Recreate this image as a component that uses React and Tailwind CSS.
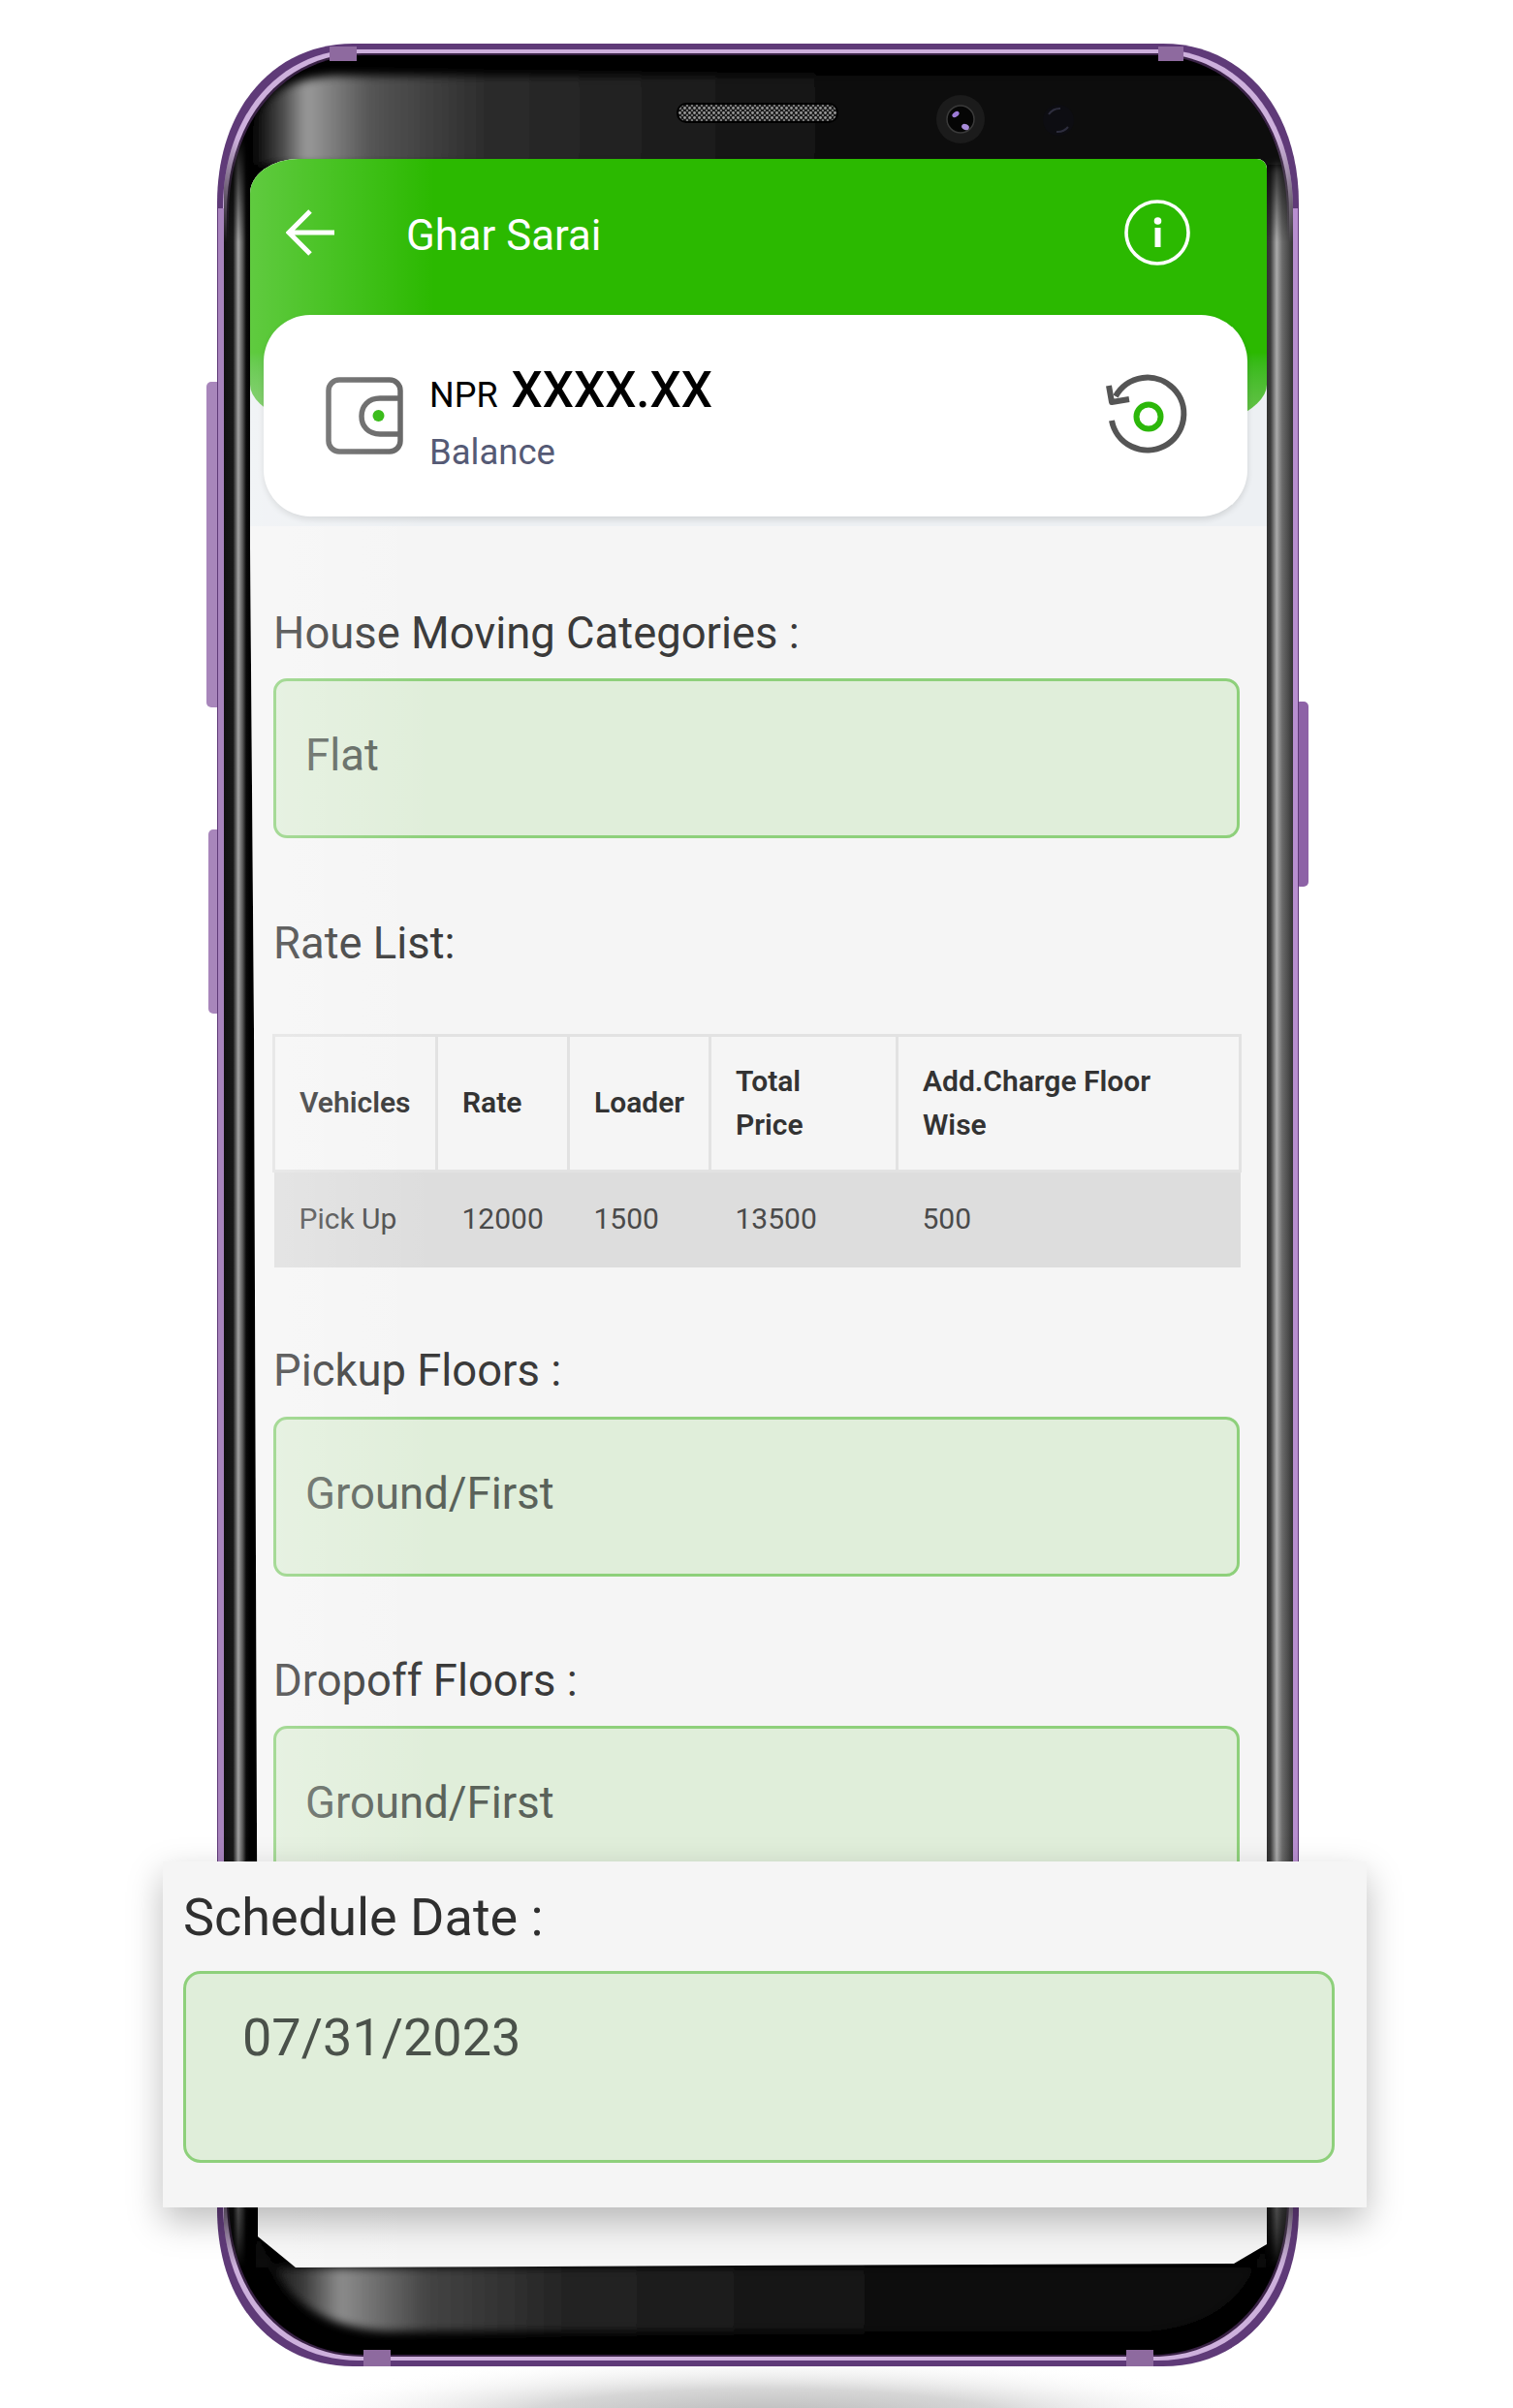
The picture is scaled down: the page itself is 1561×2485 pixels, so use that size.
import React from "react";

const framePath = (i) => {
  const l = 224 + i;
  const r = 1340 - i;
  const t = 45 + i;
  const b = 2442 - i;
  return `M${l + 140} ${t}H${r - 140}C${r - 60} ${t} ${r} ${t + 65} ${r} ${t + 165}V${b - 162}C${r} ${b - 62} ${r - 60} ${b} ${r - 140} ${b}H${l + 140}C${l + 60} ${b} ${l} ${b - 62} ${l} ${b - 162}V${t + 165}C${l} ${t + 65} ${l + 60} ${t} ${l + 140} ${t}Z`;
};

function PhoneBody() {
  return (
    <svg className="absolute inset-0" width="1561" height="2485" viewBox="0 0 1561 2485">
      <defs>
        <linearGradient id="topGlare" gradientUnits="userSpaceOnUse" x1="262" x2="860" y1="0" y2="0">
          <stop offset="0" stopColor="#050505" />
          <stop offset="0.05" stopColor="#4a4a4a" />
          <stop offset="0.09" stopColor="#9a9a9a" />
          <stop offset="0.2" stopColor="#555" />
          <stop offset="0.4" stopColor="#2c2c2c" />
          <stop offset="1" stopColor="#101010" />
        </linearGradient>
        <linearGradient id="bottomGlare" gradientUnits="userSpaceOnUse" x1="262" x2="900" y1="0" y2="0">
          <stop offset="0" stopColor="#050505" />
          <stop offset="0.08" stopColor="#3a3a3a" />
          <stop offset="0.14" stopColor="#8c8c8c" />
          <stop offset="0.28" stopColor="#444" />
          <stop offset="0.5" stopColor="#242424" />
          <stop offset="1" stopColor="#111" />
        </linearGradient>
        <linearGradient id="leftEdge" gradientUnits="userSpaceOnUse" x1="231" x2="258" y1="0" y2="0">
          <stop offset="0" stopColor="#111" />
          <stop offset="0.35" stopColor="#1a1a1a" />
          <stop offset="0.55" stopColor="#a3a3a3" />
          <stop offset="0.72" stopColor="#555" />
          <stop offset="0.85" stopColor="#0a0a0a" />
          <stop offset="1" stopColor="#000" />
        </linearGradient>
        <linearGradient id="rightEdge" gradientUnits="userSpaceOnUse" x1="1305" x2="1334" y1="0" y2="0">
          <stop offset="0" stopColor="#2a2a2a" />
          <stop offset="0.2" stopColor="#3c3c3c" />
          <stop offset="0.42" stopColor="#ababab" />
          <stop offset="0.62" stopColor="#6a6a6a" />
          <stop offset="1" stopColor="#333" />
        </linearGradient>
        <linearGradient id="sideFade" gradientUnits="userSpaceOnUse" x1="0" x2="0" y1="140" y2="2340">
          <stop offset="0" stopColor="#000" />
          <stop offset="0.05" stopColor="#fff" />
          <stop offset="0.95" stopColor="#fff" />
          <stop offset="1" stopColor="#000" />
        </linearGradient>
        <mask id="sideMask" maskUnits="userSpaceOnUse" x="200" y="100" width="1160" height="2300">
          <rect x="200" y="100" width="1160" height="2300" fill="url(#sideFade)" />
        </mask>
        <clipPath id="bodyClip"><path d={framePath(6)} /></clipPath>
        <clipPath id="innerClip"><path d={framePath(12)} /></clipPath>
        <radialGradient id="floorShadow">
          <stop offset="0" stopColor="#b4b4b4" />
          <stop offset="0.5" stopColor="#d6d6d6" />
          <stop offset="1" stopColor="#fff" stopOpacity="0" />
        </radialGradient>
        <pattern id="mesh" width="5" height="5" patternUnits="userSpaceOnUse">
          <rect width="5" height="5" fill="#1a1a1a" />
          <circle cx="1.5" cy="1.5" r="1.4" fill="#9a9a9a" />
          <circle cx="4" cy="4" r="1.2" fill="#7a7a7a" />
        </pattern>
        <filter id="soft"><feGaussianBlur stdDeviation="5" /></filter>
      </defs>

      <ellipse cx="790" cy="2500" rx="520" ry="70" fill="url(#floorShadow)" />

      {/* side keys */}
      <rect x="213" y="394" width="16" height="336" rx="5" fill="#a886bb" />
      <rect x="215" y="856" width="14" height="190" rx="5" fill="#a886bb" />
      <rect x="1336" y="724" width="14" height="191" rx="5" fill="#8d62a6" />

      <path d={framePath(0)} fill="#5f3a78" />
      <path d={framePath(6)} fill="#cdb0dc" />
      <path d={framePath(10)} fill="#3a2246" />
      <path d={framePath(12)} fill="#000" />
      <rect x="225" y="215" width="6" height="2060" fill="#a884bd" />
      <rect x="1334" y="215" width="5" height="2060" fill="#b88fd0" />

      <g clipPath="url(#bodyClip)" mask="url(#sideMask)">
        <rect x="231" y="140" width="27" height="2200" fill="url(#leftEdge)" />
        <rect x="1305" y="140" width="29" height="2200" fill="url(#rightEdge)" />
      </g>

      <g clipPath="url(#innerClip)">
        <path d="M262 170V135Q268 84 345 78H1330V170Z" fill="url(#topGlare)" filter="url(#soft)" />
        <path d="M262 2280Q280 2400 400 2406H1180Q1290 2400 1306 2300V2340H262Z" fill="url(#bottomGlare)" filter="url(#soft)" />
      </g>

      {/* antenna bands */}
      <rect x="340" y="48" width="28" height="15" fill="#8e6a9f" />
      <rect x="1195" y="48" width="26" height="15" fill="#8e6a9f" />
      <rect x="375" y="2425" width="28" height="17" fill="#8e6a9f" />
      <rect x="1162" y="2425" width="28" height="17" fill="#8e6a9f" />

      {/* speaker and cameras */}
      <rect x="699" y="107" width="165" height="19" rx="9" fill="url(#mesh)" stroke="#000" strokeWidth="2" />
      <circle cx="991" cy="123" r="25" fill="#1b1b1b" />
      <circle cx="991" cy="123" r="14" fill="#050505" stroke="#3a3a3a" strokeWidth="1.5" />
      <ellipse cx="986" cy="118" rx="4" ry="2.5" fill="#9c7ad6" transform="rotate(-35 986 118)" />
      <ellipse cx="996" cy="131" rx="4" ry="3" fill="#a88bd8" transform="rotate(25 996 131)" />
      <circle cx="1092" cy="124" r="16" fill="#0d0d12" />
      <path d="M1082 118a14 14 0 0 1 12-6M1090 136a14 14 0 0 0 12-5" stroke="#2d2d3d" strokeWidth="2" fill="none" />
    </svg>
  );
}

function WalletIcon() {
  return (
    <svg width="80" height="80" viewBox="0 0 80 80" fill="none" className="shrink-0">
      <rect x="3" y="3" width="74" height="74" rx="11" stroke="#636363" strokeWidth="5.5" />
      <path d="M77 22H56C44 22 37 30 37 40.5S44 59 56 59H77" stroke="#636363" strokeWidth="5.5" />
      <circle cx="54.5" cy="40" r="6" fill="#2cb70a" />
    </svg>
  );
}

function ReloadIcon() {
  return (
    <svg width="88" height="88" viewBox="0 0 88 88" fill="none" className="shrink-0">
      <path d="M7 49A37.5 37.5 0 1 0 11 24" stroke="#555" strokeWidth="6" />
      <path d="M4 13L7 30L25 27" stroke="#555" strokeWidth="6" strokeLinejoin="round" />
      <circle cx="45" cy="45" r="12.5" stroke="#2cb70a" strokeWidth="6" />
    </svg>
  );
}

function InfoIcon() {
  return (
    <svg width="68" height="68" viewBox="0 0 68 68" fill="none">
      <circle cx="34" cy="34" r="32" stroke="#fff" strokeWidth="3.6" />
      <circle cx="34.5" cy="22" r="3.8" fill="#fff" />
      <rect x="31.5" y="29" width="6" height="20" fill="#fff" />
    </svg>
  );
}

function BackArrow() {
  return (
    <svg width="52" height="48" viewBox="0 0 52 48" fill="none">
      <path d="M50 24H4M25 2L3 24L25 46" stroke="#fff" strokeWidth="5" />
    </svg>
  );
}

function FloorBox({ value }) {
  return (
    <div className="h-[165px] rounded-[14px] border-[3px] border-[#8ed07b] bg-[#e0eeda] pl-[30px] pt-[42px] text-[45.5px] leading-[70px] text-[#5a625a]">
      {value}
    </div>
  );
}

function Label({ children, className }) {
  return <p className={`h-[60px] text-[45.4px] leading-[60px] text-[#3a3a3a] ${className}`}>{children}</p>;
}

const headers = ["Vehicles", "Rate", "Loader", <>Total<br />Price</>, "Add.Charge Floor Wise"];
const row = ["Pick Up", "12000", "1500", "13500", "500"];

export default function App() {
  return (
    <div className="relative h-[2485px] w-[1561px] overflow-hidden bg-white pl-[258px] pt-[164px] font-['Roboto',sans-serif]">
      <PhoneBody />

      <div className="relative h-[2176px] w-[1049px] overflow-hidden rounded-tl-[50px_36px] rounded-tr-[10px] bg-[#f5f5f5] [clip-path:polygon(0_0,100%_0,100%_2152px,1015px_2172px,47px_2176px,8px_2144px,8px_2000px,4px_900px,0_400px)]">
        {/* header */}
        <div className="relative h-[379px] bg-[#edf0f3] pl-[14px] pr-[20px] pt-[161px]">
          <div className="absolute inset-x-0 top-0 h-[333px] rounded-b-[50%_100px] bg-linear-to-b from-[#2bb900] from-[60%] to-[#66c24a] to-[80%]" />
          <div className="absolute inset-x-0 top-0 flex h-[152px] items-center pl-[37px] pr-[79px]">
            <BackArrow />
            <p className="ml-[72px] mt-[7px] flex-1 text-[43.7px] leading-none text-white">Ghar Sarai</p>
            <InfoIcon />
          </div>
          <div className="relative flex h-[208px] items-center rounded-[48px] bg-white pl-[64px] pr-[59px] shadow-[0_3px_6px_rgba(0,0,0,0.12)]">
            <WalletIcon />
            <div className="ml-[27px] mt-[5px] flex-1">
              <p className="flex items-baseline leading-none text-black">
                <span className="text-[36px]">NPR</span>
                <span className="ml-[14px] text-[51px] font-medium">XXXX.XX</span>
              </p>
              <p className="mt-[21px] text-[36.5px] leading-none text-[#555a75]">Balance</p>
            </div>
            <ReloadIcon />
          </div>
        </div>

        {/* form */}
        <div className="pl-[24px] pr-[28px]">
          <Label className="mt-[81px]">House Moving Categories :</Label>
          <div className="mt-[16px]"><FloorBox value="Flat" /></div>

          <Label className="mt-[79px]">Rate List:</Label>
          <table className="-ml-[1px] mt-[63px] w-[997px] table-fixed border-collapse text-[30px] leading-[45px]">
            <colgroup>
              <col className="w-[168px]" />
              <col className="w-[136px]" />
              <col className="w-[146px]" />
              <col className="w-[193px]" />
              <col className="w-[354px]" />
            </colgroup>
            <thead>
              <tr className="h-[140px]">
                {headers.map((h, i) => (
                  <th key={i} className="border-[3px] border-[#e2e2e2] pb-[2px] pl-[25px] pr-[20px] text-left font-semibold text-[#333]">
                    {h}
                  </th>
                ))}
              </tr>
            </thead>
            <tbody>
              <tr className="h-[99px] bg-[#dddddd]">
                {row.map((c) => (
                  <td key={c} className="pb-[3px] pl-[26px] pr-[10px] text-[#4a4a4a]">{c}</td>
                ))}
              </tr>
            </tbody>
          </table>

          <Label className="mt-[77px]">Pickup Floors :</Label>
          <div className="mt-[17px]"><FloorBox value="Ground/First" /></div>

          <Label className="mt-[78px]">Dropoff Floors :</Label>
          <div className="mt-[16px]"><FloorBox value="Ground/First" /></div>
        </div>

        {/* glass glare from the curved edge */}
        <div className="pointer-events-none absolute inset-y-0 left-0 w-[190px] bg-linear-to-r from-white/25 to-transparent" />
      </div>

      {/* enlarged date field over the phone */}
      <div className="absolute left-[168px] top-[1921px] h-[357px] w-[1242px] bg-[#f5f5f5] pl-[21px] pr-[33px] shadow-[0_14px_34px_rgba(0,0,0,0.26)]">
        <p className="mt-[23px] h-[70px] text-[54px] leading-[70px] text-[#2f2f2f]">Schedule Date :</p>
        <div className="mt-[20px] h-[198px] rounded-[18px] border-[3px] border-[#8ed07b] bg-[#e0eeda] pl-[58px] pt-[35px] text-[54px] leading-[62px] text-[#4a514a]">
          07/31/2023
        </div>
      </div>
    </div>
  );
}
